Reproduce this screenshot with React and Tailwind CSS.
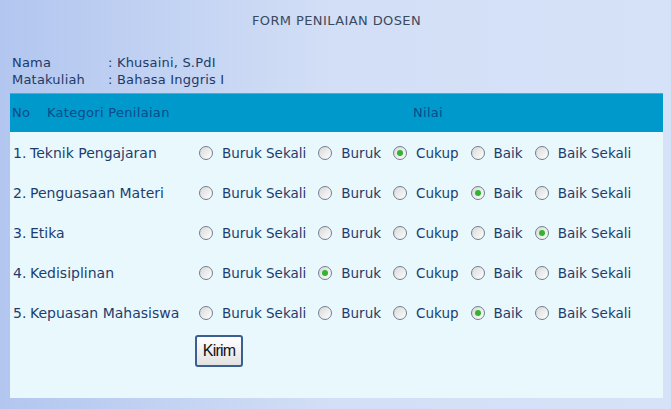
import React from 'react'

const options = ['Buruk Sekali', 'Buruk', 'Cukup', 'Baik', 'Baik Sekali']

const rows = [
  { no: '1.', name: 'Teknik Pengajaran', pick: 2 },
  { no: '2.', name: 'Penguasaan Materi', pick: 3 },
  { no: '3.', name: 'Etika', pick: 4 },
  { no: '4.', name: 'Kedisiplinan', pick: 1 },
  { no: '5.', name: 'Kepuasan Mahasiswa', pick: 3 },
]

function Radio({ checked }){
  return (
    <span className="inline-flex items-center justify-center w-[14px] h-[14px] rounded-full border border-[#6f7f90] bg-gradient-to-br from-[#d8d8d8] to-white shrink-0">
      {checked && <span className="w-[6px] h-[6px] rounded-full bg-[#2fb52f]" />}
    </span>
  )
}

export default function App(){
  return (
    <div className="w-[671px] h-[409px] bg-gradient-to-r from-[#b2c6ef] via-[#d3dff6] to-[#d6e2f8] font-['DejaVu_Sans',sans-serif] text-[#1e3d6e] overflow-hidden">
      <div className="pt-[13px] text-center text-[13px] leading-[16px] text-[#3a4a5e] tracking-[0.4px] pl-[2px]">FORM PENILAIAN DOSEN</div>

      <div className="mt-[25px] pl-[12px] text-[13px] leading-[17px] text-[#1e3a66] tracking-[0.2px]">
        <div className="flex"><span className="w-[96px]">Nama</span><span>: Khusaini, S.PdI</span></div>
        <div className="flex"><span className="w-[96px]">Matakuliah</span><span>: Bahasa Inggris I</span></div>
      </div>

      <div className="mt-[5px] mx-[10px] w-[653px]">
        <div className="h-[39px] bg-[#0099cb] flex items-center text-[13px] tracking-[0.3px] text-[#0d4a8a] border-t border-[#3fb2dc]">
          <span className="pl-[2px] w-[37px]">No</span>
          <span className="w-[366px]">Kategori Penilaian</span>
          <span>Nilai</span>
        </div>
        <div className="bg-[#e9f8fd] h-[266px] pt-[1px]">
          {rows.map((r, i) => (
            <div key={i} className="h-[40px] flex items-center">
              <span className="pl-[3px] w-[20px] text-[14px]">{r.no}</span>
              <span className="w-[169px] text-[14px]">{r.name}</span>
              <div className="flex items-center text-[13.5px]">
                {options.map((o, j) => (
                  <span key={j} className="inline-flex items-center mr-[12px]">
                    <Radio checked={j === r.pick} />
                    <span className="ml-[9px]">{o}</span>
                  </span>
                ))}
              </div>
            </div>
          ))}
          <div className="pl-[185px] pt-[2px]">
            <button className="w-[48px] h-[32px] rounded-[3px] border-2 border-[#3b5f8e] bg-gradient-to-b from-white to-[#e2e2e2] text-[16px] text-[#111] font-['Liberation_Sans',sans-serif] tracking-[-0.8px]">Kirim</button>
          </div>
        </div>
      </div>
    </div>
  )
}
